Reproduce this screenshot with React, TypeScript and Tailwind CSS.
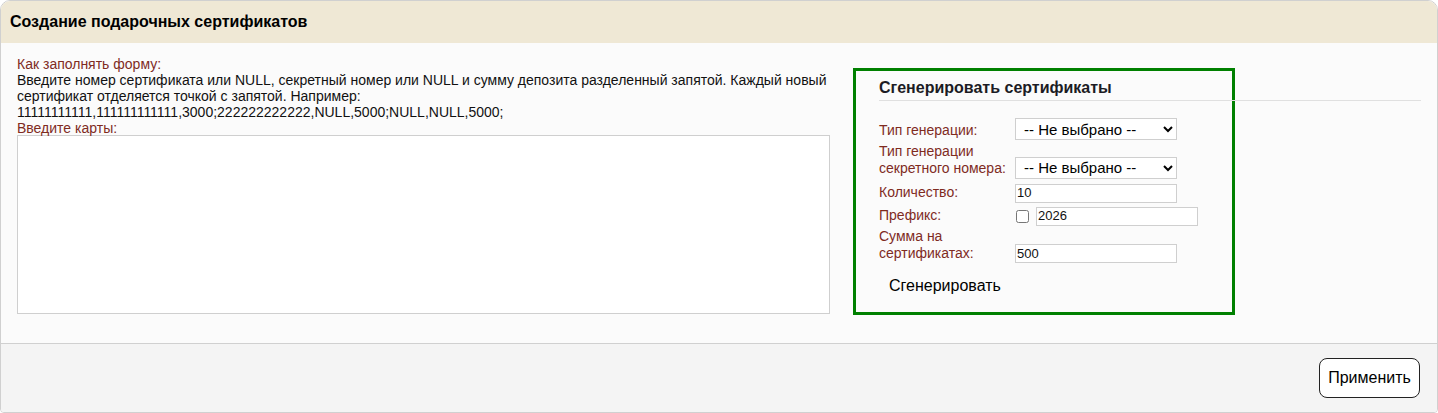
export default function App() {
  const labelCls = "w-[136px] shrink-0 text-[14px] leading-[17px] text-[#7f2b1f]";
  return (
    <div className="bg-white font-['Liberation_Sans',Arial,sans-serif] text-[#111]">
      <div className="w-full border border-[#d0d0d0] rounded-t-[10px] rounded-b-[4px] overflow-hidden">
        {/* шапка */}
        <div className="h-[42px] bg-[#efe8d5] flex items-center px-[9px]">
          <h2 className="text-[16px] font-bold text-black">Создание подарочных сертификатов</h2>
        </div>

        {/* тело */}
        <div className="bg-[#fbfbfb] flex pl-[16px] pt-[13px] pb-[28px] h-[300px]">
          <div className="w-[813px] shrink-0 text-[14px] leading-[16px]">
            <div className="text-[#7f2b1f]">Как заполнять форму:</div>
            <div>
              Введите номер сертификата или NULL, секретный номер или NULL и сумму депозита разделенный запятой. Каждый новый
              сертификат отделяется точкой с запятой. Например:
            </div>
            <div>11111111111,111111111111,3000;222222222222,NULL,5000;NULL,NULL,5000;</div>
            <div className="text-[#7f2b1f]">Введите карты:</div>
            <textarea className="block w-[813px] h-[179px] border border-[#cfcfcf] bg-white resize-none mt-[-1px]" />
          </div>

          {/* генерация */}
          <div className="ml-[23px] mt-[12px] w-[382px] h-[247px] shrink-0 border-[3px] border-[#008000] pl-[23px] pt-[8px]">
            <h3 className="w-[542px] text-[16px] leading-[18px] font-bold text-[#1c1c24] pb-[3px] border-b border-[#e0e0e0]">
              Сгенерировать сертификаты
            </h3>

            <div className="mt-[17px] flex flex-col gap-[3px]">
              <div className="flex items-baseline-last">
                <div className={labelCls}>Тип генерации:</div>
                <select className="w-[162px] h-[22px] border border-[#cfcfcf] bg-white text-[15px] text-black pl-[4px]">
                  <option>-- Не выбрано --</option>
                </select>
              </div>
              <div className="flex items-baseline-last">
                <div className={labelCls}>
                  Тип генерации
                  <br />
                  секретного номера:
                </div>
                <select className="w-[162px] h-[22px] border border-[#cfcfcf] bg-white text-[15px] text-black pl-[4px]">
                  <option>-- Не выбрано --</option>
                </select>
              </div>
              <div className="flex items-baseline-last mt-[2px]">
                <div className={labelCls}>Количество:</div>
                <input
                  defaultValue="10"
                  className="w-[162px] h-[19px] border border-[#cfcfcf] bg-white text-[13px] px-[1px]"
                />
              </div>
              <div className="flex items-baseline-last mt-[1px]">
                <div className={labelCls}>Префикс:</div>
                <input type="checkbox" className="w-[13px] h-[13px] ml-[1px] mr-[7px] self-center" />
                <input
                  defaultValue="2026"
                  className="w-[162px] h-[19px] border border-[#cfcfcf] bg-white text-[13px] px-[1px]"
                />
              </div>
              <div className="flex items-baseline-last -mt-[1px]">
                <div className={labelCls}>
                  Сумма на
                  <br />
                  сертификатах:
                </div>
                <input
                  defaultValue="500"
                  className="w-[162px] h-[19px] border border-[#cfcfcf] bg-white text-[13px] px-[1px]"
                />
              </div>
            </div>

            <button className="mt-[12px] px-[10px] py-[2px] text-[16px] leading-[18px] text-black">Сгенерировать</button>
          </div>
        </div>

        {/* подвал */}
        <div className="h-[69px] bg-[#f4f4f4] border-t border-[#d0d0d0] flex items-start justify-end pt-[14px] pr-[17px]">
          <button className="w-[101px] h-[40px] border border-[#222] rounded-[8px] bg-white text-[16px] text-black">
            Применить
          </button>
        </div>
      </div>
    </div>
  );
}
